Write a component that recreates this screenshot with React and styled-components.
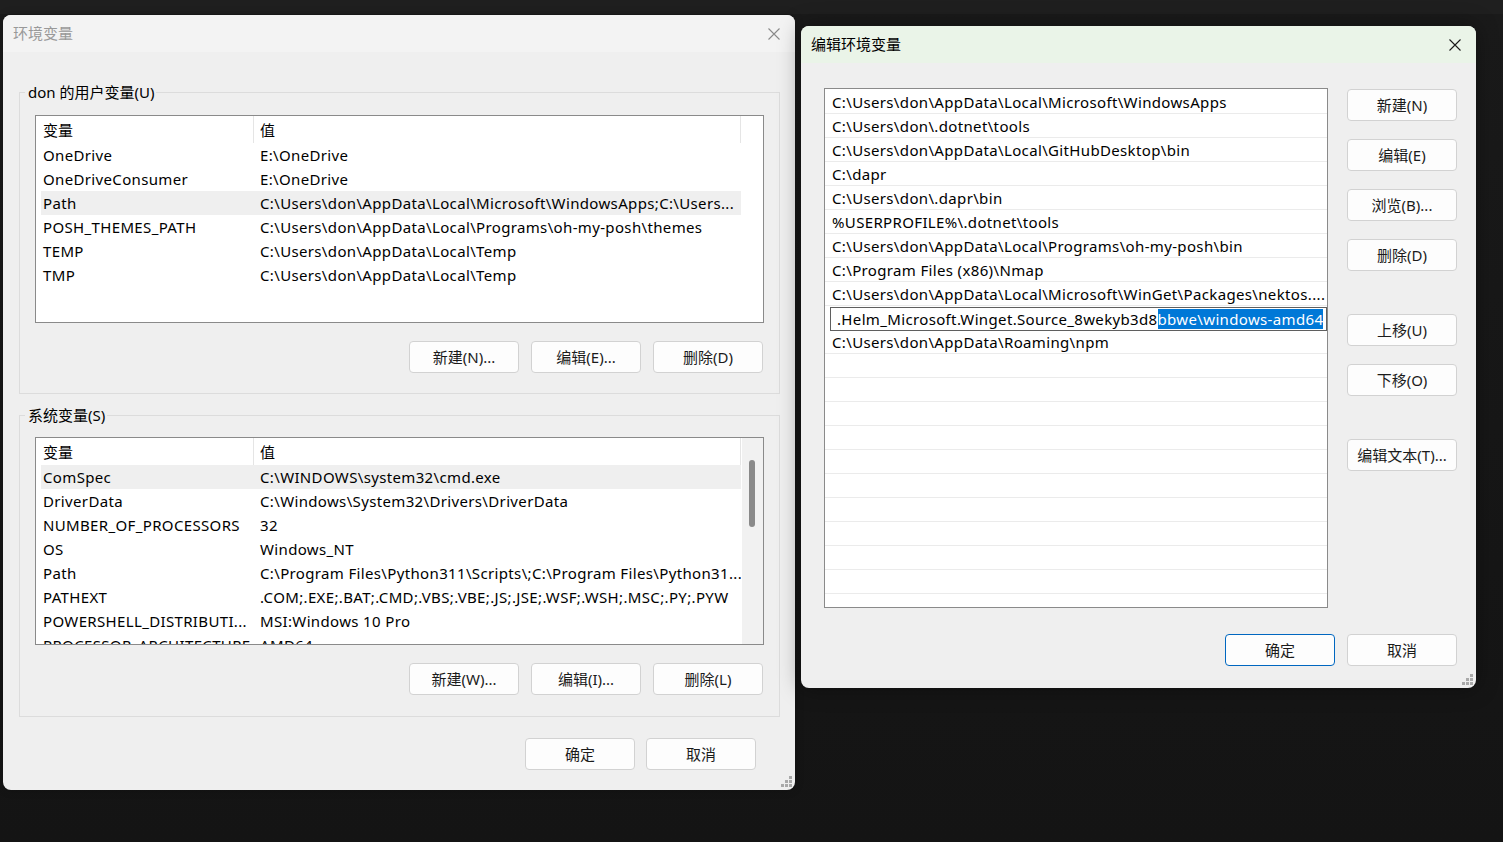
import React from 'react';
import styled, { createGlobalStyle } from 'styled-components';

const GlobalStyle = createGlobalStyle`
  html, body {
    margin: 0;
    padding: 0;
  }
  body {
    background: #171717;
    font-family: "Noto Sans", "Noto Sans CJK SC", sans-serif;
    font-size: 15px;
    color: #000;
    overflow: hidden;
  }
`;

const Desktop = styled.div`
  position: relative;
  width: 1503px;
  height: 842px;
  background: linear-gradient(#1f1f1f 0, #1f1f1f 14px, #1a1a1a 14px, #141414 100%);
  overflow: hidden;
`;

const Window = styled.div`
  position: absolute;
  left: ${(p) => p.$x}px;
  top: ${(p) => p.$y}px;
  width: ${(p) => p.$w}px;
  height: ${(p) => p.$h}px;
  background: #efefef;
  border-radius: 8px;
  overflow: hidden;
  display: flex;
  flex-direction: column;
  box-shadow: ${(p) => (p.$active ? '0 0 22px rgba(0, 0, 0, 0.38)' : '0 0 10px rgba(0, 0, 0, 0.2)')};
  z-index: ${(p) => (p.$active ? 2 : 1)};
`;

const TitleBar = styled.div`
  flex: none;
  height: 37px;
  display: flex;
  align-items: center;
  justify-content: space-between;
  padding: 0 15px 0 10px;
  background: ${(p) => (p.$active ? '#eaf4e8' : '#f3f3f3')};
`;

const Title = styled.span`
  font-size: 15px;
  line-height: 20px;
  margin-top: -2px;
  color: ${(p) => (p.$active ? '#000' : '#999')};
`;

const LeftBody = styled.div`
  flex: 1;
  padding: 40px 15px 0 16px;
  display: flex;
  flex-direction: column;
`;

const Group = styled.div`
  position: relative;
  border: 1px solid #dcdcdc;
  padding: ${(p) => (p.$second ? '21px 15px 21px 15px' : '22px 15px 20px 15px')};
  margin-top: ${(p) => (p.$second ? 21 : 0)}px;
`;

const Legend = styled.span`
  position: absolute;
  left: 5px;
  top: -11px;
  padding: 0 2px 0 3px;
  background: #efefef;
  line-height: 20px;
`;

const ListView = styled.div`
  height: 208px;
  box-sizing: border-box;
  border: 1px solid #8a8a8a;
  background: #fff;
  display: flex;
  overflow: hidden;
`;

const ListBody = styled.div`
  flex: 1;
  padding-left: 5px;
  overflow: hidden;
`;

const Columns = styled.div`
  display: grid;
  grid-template-columns: 213px 487px;
  height: ${(p) => (p.$header ? 27 : 24)}px;
  align-items: stretch;
  background: ${(p) => (p.$selected ? '#efefef' : 'transparent')};
  width: 700px;
`;

const Cell = styled.div`
  display: flex;
  align-items: center;
  box-sizing: border-box;
  padding-left: ${(p) => (p.$first ? 2 : 6)}px;
  white-space: nowrap;
  overflow: hidden;
  line-height: 20px;
  letter-spacing: ${(p) => (p.$header ? 0 : 0.35)}px;
  border-right: ${(p) => (p.$header ? '1px solid #e5e5e5' : 'none')};
`;

const Scrollbar = styled.div`
  flex: none;
  width: 21px;
  background: ${(p) => (p.$blank ? '#fff' : '#f1f1f1')};
  position: relative;
`;

const Thumb = styled.div`
  position: absolute;
  left: 7px;
  top: 22px;
  width: 6px;
  height: 67px;
  border-radius: 3px;
  background: #8a8a8a;
`;

const ButtonRow = styled.div`
  display: flex;
  justify-content: flex-end;
  gap: ${(p) => p.$gap || 11}px;
  margin-top: ${(p) => p.$top || 0}px;
  padding-right: ${(p) => p.$right || 0}px;
`;

const Button = styled.button`
  width: 110px;
  height: 32px;
  box-sizing: border-box;
  padding: 0;
  border: 1px solid ${(p) => (p.$primary ? '#0067c0' : '#d2d2d2')};
  border-radius: 4px;
  background: #fdfdfd;
  font-family: inherit;
  font-size: 15px;
  line-height: 20px;
  color: #1b1b1b;
  display: flex;
  align-items: center;
  justify-content: center;
  margin-top: ${(p) => p.$gapBefore || 0}px;
`;

const RightBody = styled.div`
  flex: 1;
  padding: 25px 19px 0 23px;
  display: flex;
  flex-direction: column;
`;

const Main = styled.div`
  display: flex;
  gap: 19px;
`;

const PathList = styled.div`
  width: 504px;
  height: 520px;
  box-sizing: border-box;
  border: 1px solid #8a8a8a;
  background: #fff;
  padding-top: 1px;
  overflow: hidden;
`;

const PathRow = styled.div`
  height: 24px;
  box-sizing: border-box;
  border-bottom: 1px solid #ebebeb;
  padding-left: 7px;
  display: flex;
  align-items: center;
  white-space: nowrap;
  overflow: hidden;
  line-height: 20px;
  letter-spacing: 0.35px;
`;

const EditRow = styled.div`
  height: 24px;
  box-sizing: border-box;
  padding: 1px 0 0 5px;
`;

const EditBox = styled.div`
  height: 24px;
  box-sizing: border-box;
  border: 1px solid #5f5f5f;
  padding: 0 0 0 6px;
  display: flex;
  align-items: center;
  white-space: nowrap;
  overflow: hidden;
  line-height: 20px;
  letter-spacing: 0.35px;
  background: #fff;
`;

const Selected = styled.span`
  background: #0078d7;
  color: #fff;
`;

const SideButtons = styled.div`
  width: 110px;
  padding-top: 1px;
  display: flex;
  flex-direction: column;
  gap: 18px;
`;

const Grip = styled.svg`
  position: absolute;
  right: 3px;
  bottom: 3px;
`;

const CloseIcon = ({ color }) => (
  <svg width="12" height="12" viewBox="0 0 12 12">
    <path d="M0.5 0.5 L11.5 11.5 M11.5 0.5 L0.5 11.5" stroke={color} strokeWidth="1.1" fill="none" />
  </svg>
);

const ResizeGrip = () => (
  <Grip width="11" height="11" viewBox="0 0 11 11">
    <g fill="#a9a9a9">
      <rect x="8" y="0" width="3" height="3" />
      <rect x="4" y="4" width="3" height="3" />
      <rect x="8" y="4" width="3" height="3" />
      <rect x="0" y="8" width="3" height="3" />
      <rect x="4" y="8" width="3" height="3" />
      <rect x="8" y="8" width="3" height="3" />
    </g>
  </Grip>
);

const userVars = [
  ['OneDrive', 'E:\\OneDrive'],
  ['OneDriveConsumer', 'E:\\OneDrive'],
  ['Path', 'C:\\Users\\don\\AppData\\Local\\Microsoft\\WindowsApps;C:\\Users...', true],
  ['POSH_THEMES_PATH', 'C:\\Users\\don\\AppData\\Local\\Programs\\oh-my-posh\\themes'],
  ['TEMP', 'C:\\Users\\don\\AppData\\Local\\Temp'],
  ['TMP', 'C:\\Users\\don\\AppData\\Local\\Temp'],
];

const systemVars = [
  ['ComSpec', 'C:\\WINDOWS\\system32\\cmd.exe', true],
  ['DriverData', 'C:\\Windows\\System32\\Drivers\\DriverData'],
  ['NUMBER_OF_PROCESSORS', '32'],
  ['OS', 'Windows_NT'],
  ['Path', 'C:\\Program Files\\Python311\\Scripts\\;C:\\Program Files\\Python31...'],
  ['PATHEXT', '.COM;.EXE;.BAT;.CMD;.VBS;.VBE;.JS;.JSE;.WSF;.WSH;.MSC;.PY;.PYW'],
  ['POWERSHELL_DISTRIBUTI...', 'MSI:Windows 10 Pro'],
  ['PROCESSOR_ARCHITECTURE', 'AMD64'],
];

const paths = [
  'C:\\Users\\don\\AppData\\Local\\Microsoft\\WindowsApps',
  'C:\\Users\\don\\.dotnet\\tools',
  'C:\\Users\\don\\AppData\\Local\\GitHubDesktop\\bin',
  'C:\\dapr',
  'C:\\Users\\don\\.dapr\\bin',
  '%USERPROFILE%\\.dotnet\\tools',
  'C:\\Users\\don\\AppData\\Local\\Programs\\oh-my-posh\\bin',
  'C:\\Program Files (x86)\\Nmap',
  'C:\\Users\\don\\AppData\\Local\\Microsoft\\WinGet\\Packages\\nektos....',
  null,
  'C:\\Users\\don\\AppData\\Roaming\\npm',
  '', '', '', '', '', '', '', '', '', '', '',
];

const VarList = ({ rows, scroll }) => (
  <ListView>
    <ListBody>
      <Columns $header>
        <Cell $first $header>变量</Cell>
        <Cell $header>值</Cell>
      </Columns>
      {rows.map(([name, value, selected]) => (
        <Columns key={name + value} $selected={selected}>
          <Cell $first>{name}</Cell>
          <Cell>{value}</Cell>
        </Columns>
      ))}
    </ListBody>
    {scroll ? (
      <Scrollbar>
        <Thumb />
      </Scrollbar>
    ) : (
      <Scrollbar $blank />
    )}
  </ListView>
);

const App = () => {
  return (
    <Desktop>
      <GlobalStyle />

      <Window $x={3} $y={15} $w={792} $h={775}>
        <TitleBar>
          <Title>环境变量</Title>
          <CloseIcon color="#8a8a8a" />
        </TitleBar>
        <LeftBody>
          <Group>
            <Legend>don 的用户变量(U)</Legend>
            <VarList rows={userVars} />
            <ButtonRow $top={18} $right={1} $gap={12}>
              <Button>新建(N)...</Button>
              <Button>编辑(E)...</Button>
              <Button>删除(D)</Button>
            </ButtonRow>
          </Group>
          <Group $second>
            <Legend>系统变量(S)</Legend>
            <VarList rows={systemVars} scroll />
            <ButtonRow $top={18} $right={1} $gap={12}>
              <Button>新建(W)...</Button>
              <Button>编辑(I)...</Button>
              <Button>删除(L)</Button>
            </ButtonRow>
          </Group>
          <ButtonRow $top={21} $right={24}>
            <Button>确定</Button>
            <Button>取消</Button>
          </ButtonRow>
        </LeftBody>
        <ResizeGrip />
      </Window>

      <Window $x={801} $y={26} $w={675} $h={662} $active>
        <TitleBar $active>
          <Title $active>编辑环境变量</Title>
          <CloseIcon color="#1a1a1a" />
        </TitleBar>
        <RightBody>
          <Main>
            <PathList>
              {paths.map((p, i) =>
                p === null ? (
                  <EditRow key={i}>
                    <EditBox>
                      .Helm_Microsoft.Winget.Source_8wekyb3d8<Selected>bbwe\windows-amd64</Selected>
                    </EditBox>
                  </EditRow>
                ) : (
                  <PathRow key={i}>{p}</PathRow>
                )
              )}
            </PathList>
            <SideButtons>
              <Button>新建(N)</Button>
              <Button>编辑(E)</Button>
              <Button>浏览(B)...</Button>
              <Button>删除(D)</Button>
              <Button $gapBefore={25}>上移(U)</Button>
              <Button>下移(O)</Button>
              <Button $gapBefore={25}>编辑文本(T)...</Button>
            </SideButtons>
          </Main>
          <ButtonRow $top={26} $gap={12}>
            <Button $primary>确定</Button>
            <Button>取消</Button>
          </ButtonRow>
        </RightBody>
        <ResizeGrip />
      </Window>
    </Desktop>
  );
};

export default App;
